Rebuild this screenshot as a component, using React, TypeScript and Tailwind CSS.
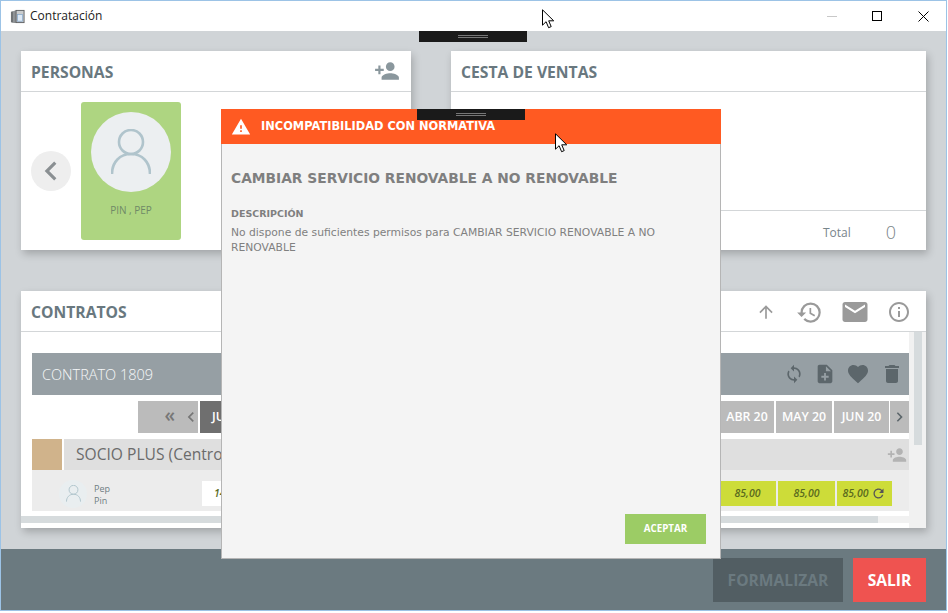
import {
  MdPersonAdd,
  MdHistory,
  MdEmail,
  MdInfoOutline,
  MdArrowUpward,
  MdSync,
  MdNoteAdd,
  MdFavorite,
  MdDelete,
  MdRefresh,
  MdWarning,
  MdChevronLeft,
  MdChevronRight,
} from 'react-icons/md';

const sans = 'font-["Open_Sans",sans-serif]';

function PersonGlyph({ className }: { className: string }) {
  return (
    <svg viewBox="0 0 40 46" fill="none" stroke="#b0c4cc" strokeWidth="2.6" className={className}>
      <circle cx="20" cy="13" r="12" />
      <path d="M1 45c0-12 8-20 19-20s19 8 19 20" />
    </svg>
  );
}

function Cursor({ className }: { className: string }) {
  return (
    <svg viewBox="0 0 13 20" className={className}>
      <path d="M.5.8v15.4l3.6-3.5 2.5 6 2.6-1.1-2.5-5.8h5z" fill="#fff" stroke="#000" strokeWidth="1" />
    </svg>
  );
}

function Handle({ className }: { className: string }) {
  return (
    <div className={`absolute w-[108px] h-[11px] bg-[#1a1a1a] flex flex-col items-center justify-center gap-px ${className}`}>
      <div className="w-[30px] h-px bg-[#777]" />
      <div className="w-[30px] h-px bg-[#777]" />
    </div>
  );
}

function CardHeader({ title, children }: { title: string; children?: React.ReactNode }) {
  return (
    <div className="h-[41px] shrink-0 flex items-center justify-between pl-[10px] pr-[15px] pt-[2px] border-b border-[#d3d6d8]">
      <span className="text-[15.7px] font-bold text-[#69787f] pt-[2px]">{title}</span>
      {children}
    </div>
  );
}

const MONTHS = [
  { label: 'ABR 20', w: 'w-[54px]' },
  { label: 'MAY 20', w: 'w-[56px]' },
  { label: 'JUN 20', w: 'w-[55px]' },
];

const FEES = ['w-[57px]', 'w-[57px]', 'w-[55px]'];

export default function App() {
  return (
    <div className={`relative w-[948px] h-[613px] bg-white overflow-hidden ${sans}`}>
      <div className="w-[947px] h-[611px] flex flex-col border border-[#9cc3e6]">
        {/* title bar */}
        <div className="h-[30px] shrink-0 bg-white flex items-center pl-[9px] relative">
          <svg viewBox="0 0 16 16" className="w-[15px] h-[15px]">
            <path d="M1 3l3-1v13l-3-1z" fill="#6f7376" />
            <path d="M4 2l3-1v14H4z" fill="#8d9194" />
            <rect x="6.5" y="1.5" width="8.5" height="13" fill="#c9ccce" stroke="#5e6163" strokeWidth="1" />
            <rect x="8" y="6" width="5.5" height="7" fill="#dce8f5" stroke="#7fa3c7" strokeWidth="0.7" />
          </svg>
          <span className="ml-[5px] text-[12px] text-[#222]">Contratación</span>
          <div className="ml-auto flex items-center h-full">
            <div className="w-[10px] h-px bg-[#c8c8c8] mr-[35px]" />
            <div className="w-[10px] h-[10px] border border-black mr-[36px]" />
            <svg viewBox="0 0 11 11" className="w-[11px] h-[11px] mr-[17px]" stroke="#000" strokeWidth="1">
              <path d="M.5.5l10 10M10.5.5l-10 10" />
            </svg>
          </div>
        </div>

        {/* main */}
        <div className="flex-1 bg-[#d0d4d7] px-[20px] pt-[20px]">
          <div className="flex gap-[40px] h-[199px]">
            <div className="w-[390px] bg-white shadow-[2px_4px_8px_rgba(0,0,0,0.22)] flex flex-col">
              <CardHeader title="PERSONAS">
                <MdPersonAdd className="w-[26px] h-[26px] text-[#8a979d] -mt-[3px] -mr-[4px]" />
              </CardHeader>
              <div className="flex-1 flex items-center pl-[10px]">
                <div className="w-[40px] h-[40px] rounded-full bg-[#eeeeee] flex items-center justify-center">
                  <MdChevronLeft className="w-[38px] h-[38px] text-[#8a8f92]" />
                </div>
                <div className="ml-[10px] w-[100px] h-[138px] rounded-[3px] bg-[#aed581] flex flex-col items-center pt-[10px]">
                  <div className="w-[80px] h-[80px] rounded-full bg-[#eceff1] flex items-center justify-center">
                    <PersonGlyph className="w-[40px] h-[46px]" />
                  </div>
                  <span className="mt-[11px] text-[10px] text-[#6f8a67]">PIN , PEP</span>
                </div>
              </div>
            </div>

            <div className="flex-1 bg-white shadow-[2px_4px_8px_rgba(0,0,0,0.22)] flex flex-col">
              <CardHeader title="CESTA DE VENTAS" />
              <div className="flex-1" />
              <div className="h-[40px] border-t border-[#d3d6d8] flex items-center justify-end pr-[30px] pt-[4px]">
                <span className="text-[12px] text-[#78858b] mr-[35px]">Total</span>
                <span className="text-[18px] font-light text-[#7b8488]">0</span>
              </div>
            </div>
          </div>

          <div className="mt-[41px] h-[237px] bg-white shadow-[2px_4px_8px_rgba(0,0,0,0.22)] flex flex-col">
            <CardHeader title="CONTRATOS">
              <div className="flex items-center text-[#9a9a9a]">
                <MdArrowUpward className="w-[20px] h-[20px] mr-[20px]" />
                <MdHistory className="w-[27px] h-[27px] mr-[17px]" />
                <MdEmail className="w-[30px] h-[30px] mr-[17px]" />
                <MdInfoOutline className="w-[24px] h-[24px]" />
              </div>
            </CardHeader>
            <div className="flex-1 flex min-h-0">
              <div className="flex-1 flex flex-col min-w-0">
                <div className="flex-1 pl-[11px] pt-[21px]">
                  <div className="h-[42px] bg-[#969fa4] flex items-center justify-between pl-[10px] pr-[5px]">
                    <span className="text-[14.5px] font-light text-[#f7f8f9] pt-[2px]">CONTRATO 1809</span>
                    <div className="flex items-center gap-[10px] text-[#5c666b]">
                      <MdSync className="w-[20px] h-[20px]" />
                      <MdNoteAdd className="w-[22px] h-[22px]" />
                      <MdFavorite className="w-[24px] h-[24px]" />
                      <MdDelete className="w-[24px] h-[24px]" />
                    </div>
                  </div>
                  <div className="mt-[6px] h-[32px] flex gap-[2px] text-[12.3px] font-semibold text-white">
                    <div className="ml-[106px] w-[60px] bg-[#bbbbbb] flex items-center justify-end gap-[6px] text-[#777]">
                      <span className="text-[19px] leading-none -mt-[3px]">«</span>
                      <MdChevronLeft className="w-[20px] h-[20px] -mr-[3px]" />
                    </div>
                    <div className="w-[60px] bg-[#6f6f6f] flex items-center pl-[12px]">JUL 19</div>
                    <div className="flex-1" />
                    {MONTHS.map(m => (
                      <div key={m.label} className={`${m.w} bg-[#bbbbbb] flex items-center justify-center`}>
                        {m.label}
                      </div>
                    ))}
                    <div className="w-[19px] -ml-px bg-[#bbbbbb] flex items-center justify-center">
                      <MdChevronRight className="w-[20px] h-[20px] text-[#5c666b]" />
                    </div>
                  </div>
                  <div className="mt-[6px] h-[31px] flex">
                    <div className="w-[30px] bg-[#d0b38b]" />
                    <div className="ml-[2px] flex-1 bg-[#dfdfdf] flex items-center justify-between pl-[12px] pr-[2px]">
                      <span className="text-[15.6px] text-[#6b6b6b]">SOCIO PLUS (Centro)</span>
                      <MdPersonAdd className="w-[20px] h-[20px] text-[#b3b3b3]" />
                    </div>
                  </div>
                  <div className="h-[41px] bg-[#ececec] flex items-center pl-[27px] pt-[6px]">
                    <div className="w-[28px] h-[28px] rounded-full bg-[#e9eef0] flex items-center justify-center">
                      <PersonGlyph className="w-[15px] h-[17px]" />
                    </div>
                    <div className="ml-[7px] w-[20px] pt-[2px] text-[9px] leading-[12px] text-[#6f7d83]">
                      <div>Pep</div>
                      <div>Pin</div>
                    </div>
                    <div className="ml-[88px] w-[75px] h-[25px] bg-white flex items-center pl-[12px] text-[10.5px] italic font-semibold text-[#5b6b1e]">
                      14,00
                    </div>
                    <div className="flex-1" />
                    <div className="flex gap-[2px] mr-[17px]">
                      {FEES.map((w, i) => (
                        <div
                          key={i}
                          className={`${w} h-[25px] bg-[#cddc39] flex items-center justify-center gap-[3px] text-[10.5px] italic font-semibold text-[#5b6b1e]`}
                        >
                          85,00
                          {i === 2 && <MdRefresh className="w-[15px] h-[15px] not-italic text-[#555]" />}
                        </div>
                      ))}
                    </div>
                  </div>
                </div>
                <div className="h-[7px] mb-[5px] bg-[#f1f1f1] shrink-0">
                  <div className="w-[857px] h-full bg-[#d6dbdd]" />
                </div>
              </div>
              <div className="w-[17px] bg-[#f1f1f1] flex justify-center">
                <div className="w-[8px] h-[113px] bg-[#d6dbdd]" />
              </div>
            </div>
          </div>
        </div>

        {/* footer */}
        <div className="h-[61px] shrink-0 bg-[#6b7a80] flex items-start justify-end gap-[10px] pt-[9px] pr-[20px]">
          <div className="w-[130px] h-[44px] bg-[#525e63] flex items-center justify-center pt-[2px] text-[15.6px] font-bold text-[#6b7a80]">
            FORMALIZAR
          </div>
          <div className="w-[73px] h-[44px] bg-[#ef5350] flex items-center justify-center pt-[2px] text-[15.6px] font-bold text-white">
            SALIR
          </div>
        </div>
      </div>

      <Handle className="left-[419px] top-[31px]" />

      {/* dialog */}
      <div className="absolute left-[221px] top-[109px] w-[500px] h-[450px] flex flex-col bg-[#f4f4f4] border-x border-b border-[#b5b5b5]">
        <div className="h-[35px] -mx-px shrink-0 bg-[#ff5a22] flex items-center pl-[11px]">
          <MdWarning className="w-[20px] h-[20px] text-white -ml-px" />
          <span className="ml-[10px] font-['DejaVu_Sans',sans-serif] text-[11.4px] font-bold text-white">
            INCOMPATIBILIDAD CON NORMATIVA
          </span>
        </div>
        <div className="flex-1 flex flex-col pl-[9px] pr-[14px] pt-[24px] pb-[14px]">
          <h2 className="font-['DejaVu_Sans',sans-serif] text-[13.8px] leading-[20px] font-bold text-[#7f7f7f]">
            CAMBIAR SERVICIO RENOVABLE A NO RENOVABLE
          </h2>
          <div className="mt-[20px] font-['DejaVu_Sans',sans-serif] text-[9.5px] leading-[12px] font-bold text-[#7f7f7f]">
            DESCRIPCIÓN
          </div>
          <p className="mt-[5px] w-[450px] font-['DejaVu_Sans',sans-serif] text-[10.75px] leading-[15px] text-[#808080]">
            No dispone de suficientes permisos para CAMBIAR SERVICIO RENOVABLE A NO RENOVABLE
          </p>
          <div className="mt-auto self-end w-[81px] h-[30px] bg-[#9ccc65] flex items-center justify-center text-[9.8px] font-bold text-white">
            ACEPTAR
          </div>
        </div>
      </div>

      <Handle className="left-[417px] top-[109px]" />

      <Cursor className="absolute left-[542px] top-[9px] w-[13px] h-[20px]" />
      <Cursor className="absolute left-[555px] top-[133px] w-[13px] h-[20px]" />
    </div>
  );
}
